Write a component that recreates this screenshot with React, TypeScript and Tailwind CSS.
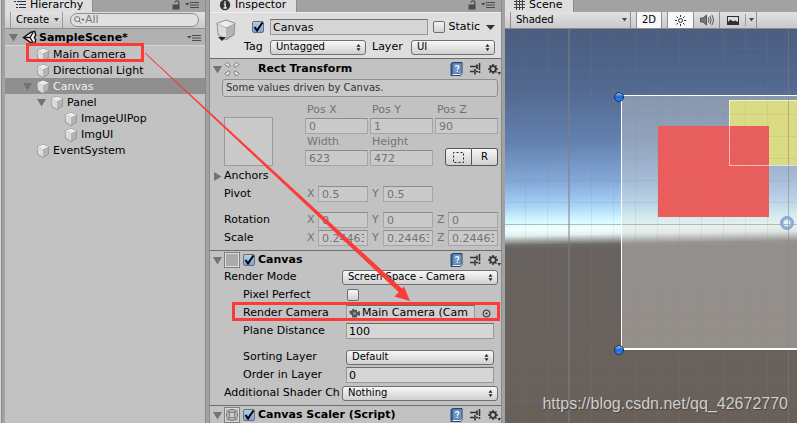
import React from "react";

const font = "font-['DejaVu_Sans',sans-serif]";

function Cube({ className = "h-4 w-4" }: { className?: string }) {
  return (
    <svg className={className} viewBox="0 0 16 16" aria-hidden="true">
      <path d="M8 1 14.3 3.4 13.6 11.4 8 15 2.4 11.4 1.7 3.4Z" fill="#8e8e8e" />
      <path d="M8 1.6 13.8 3.8 8 6.4 2.2 3.8Z" fill="#ececec" />
      <path d="M2.3 4.1 8 6.6V14.2L3.1 11Z" fill="#dcdcdc" />
      <path d="M13.7 4.1 8 6.6V14.2L12.9 11Z" fill="#b4b4b4" />
    </svg>
  );
}

function Fold({ open = true }: { open?: boolean }) {
  return (
    <svg className="h-[9px] w-[9px] shrink-0" viewBox="0 0 9 9" aria-hidden="true">
      <path d={open ? "M0 1H9L4.5 8.5Z" : "M1 0V9L8.5 4.5Z"} fill="#737373" />
    </svg>
  );
}

function PaneMenu() {
  return (
    <svg className="h-2 w-[14px]" viewBox="0 0 14 8" aria-hidden="true">
      <path d="M0 2H4.6L2.3 4.6Z" fill="#4a4a4a" />
      <path d="M5 1.5H14M5 4H14M5 6.5H14" stroke="#4a4a4a" />
    </svg>
  );
}

function Lock() {
  return (
    <svg className="h-[10px] w-[9px]" viewBox="0 0 9 10" aria-hidden="true">
      <rect x="0.5" y="4.5" width="7" height="5" fill="#4a4a4a" />
      <path d="M3 2.5C3.3 .2 6.8 .2 6.8 2.5V5" fill="none" stroke="#4a4a4a" strokeWidth="1.2" />
    </svg>
  );
}

function SmallArrow() {
  return (
    <svg className="h-1 w-[5px]" viewBox="0 0 5 4" aria-hidden="true">
      <path d="M0 0H5L2.5 3.5Z" fill="#4a4a4a" />
    </svg>
  );
}

// Tab strip on top of each pane
function TabBar({
  title,
  icon,
  width,
  tools = false,
}: {
  title: string;
  icon: React.ReactNode;
  width: string;
  tools?: boolean;
}) {
  return (
    <div className="flex h-3 shrink-0 items-start justify-between bg-[#a2a2a2]">
      <div
        className={`flex h-3 items-center gap-1 border-r border-[#8a8a8a] bg-[#dedede] pb-[3px] pl-[9px] ${width}`}
      >
        {icon}
        <h2 className="leading-3">{title}</h2>
      </div>
      {tools && (
        <div className="flex h-[10px] items-center gap-1 pr-[6px]">
          <Lock />
          <PaneMenu />
        </div>
      )}
    </div>
  );
}

const tree = [
  { name: "Main Camera", pad: "pl-[18px]", fold: false },
  { name: "Directional Light", pad: "pl-[18px]", fold: false },
  { name: "Canvas", pad: "pl-[18px]", fold: true, active: true },
  { name: "Panel", pad: "pl-8", fold: true },
  { name: "ImageUIPop", pad: "pl-[46px]", fold: false },
  { name: "ImgUI", pad: "pl-[46px]", fold: false },
  { name: "EventSystem", pad: "pl-[18px]", fold: false },
];

function Hierarchy() {
  return (
    <section className="flex w-[200px] shrink-0 flex-col bg-[#c2c2c2]">
      <TabBar
        title="Hierarchy"
        width="w-[88px]"
        tools
        icon={
          <svg className="h-3 w-3" viewBox="0 0 12 12" aria-hidden="true">
            <path d="M3 2.5H12M5 5.5H12M5 8.5H12" stroke="#333" />
            <path d="M0 2.5H2M2 5.5H4M2 8.5H4" stroke="#333" />
          </svg>
        }
      />
      <div className="flex h-[17px] items-center border-b border-[#8f8f8f] bg-linear-to-b from-[#e2e2e2] to-[#c9c9c9] pl-[5px] pr-[6px]">
        <button className="flex h-4 w-[53px] items-center justify-between border-x border-[#9a9a9a] pl-[5px] pr-[3px] text-[10px]">
          Create
          <SmallArrow />
        </button>
        <label className="ml-[7px] flex h-[14px] flex-1 items-center rounded-full border border-[#8c8c8c] bg-[#e0e0e0] pl-[3px]">
          <svg className="h-[10px] w-[12px]" viewBox="0 0 12 10" aria-hidden="true">
            <circle cx="3.5" cy="4" r="2.8" fill="none" stroke="#6b6b6b" />
            <path d="M5.5 6 8 9" stroke="#6b6b6b" />
            <path d="M7.5 3.5H12L9.7 6Z" fill="#6b6b6b" />
          </svg>
          <input
            aria-label="Search"
            placeholder="All"
            className="w-full min-w-0 bg-transparent text-[11px] leading-3 outline-none placeholder:text-[#7b7b7b]"
          />
        </label>
      </div>
      <div className="flex h-[17px] items-center border-b border-[#d4d4d4] bg-[#b1b1b1] pl-1 pr-1 pt-px font-bold">
        <Fold />
        <svg className="ml-1 h-[15px] w-[15px]" viewBox="0 0 16 16" aria-hidden="true">
          <path d="M9.6 2.4 13.6 1.4 14.6 5.5 13.2 8 14.6 10.5 13.6 14.6 9.6 13.6 1.6 8Z" fill="#f4f4f4" stroke="#111" strokeWidth="1.5" />
          <path d="M8.5 8H3M8.5 8 11.8 2.6M8.5 8 11.8 13.4" stroke="#111" strokeWidth="1.4" />
        </svg>
        <span className="ml-0.5 flex-1">SampleScene*</span>
        <PaneMenu />
      </div>
      <ul>
        {tree.map((item) => (
          <li
            key={item.name}
            className={`flex h-4 items-center pt-px ${item.pad} ${
              item.active ? "bg-[#8f8f8f] text-[#f0f0f0]" : ""
            }`}
          >
            <span className="w-3">{item.fold && <Fold />}</span>
            <Cube />
            <span className="ml-0.5">{item.name}</span>
          </li>
        ))}
      </ul>
    </section>
  );
}

function Check({ label, checked = false }: { label: string; checked?: boolean }) {
  return (
    <span className="relative block h-3 w-3 shrink-0">
      <input
        id={label}
        type="checkbox"
        aria-label={label}
        defaultChecked={checked}
        className="peer block h-3 w-3 appearance-none rounded-[2px] border border-[#6f6f6f] bg-linear-to-b from-[#f4f4f4] to-[#d2d2d2] checked:from-[#b5cdef] checked:to-[#7ba3dc]"
      />
      <svg
        className="pointer-events-none absolute left-0 top-0 hidden h-3 w-3 overflow-visible peer-checked:block"
        viewBox="0 0 12 12"
        aria-hidden="true"
      >
        <path d="M2.5 6 5 9.5 10.5 1.5" fill="none" stroke="#000" strokeWidth="2" />
      </svg>
    </span>
  );
}

function Picker({ id, value, className = "" }: { id: string; value: string; className?: string }) {
  return (
    <span className={`relative h-[15px] ${className}`}>
      <select
        id={id}
        className="block h-[15px] w-full appearance-none rounded-[3px] border border-[#707070] bg-linear-to-b from-[#f8f8f8] to-[#d0d0d0] pl-[5px] text-[10px] leading-3 text-black"
      >
        <option>{value}</option>
      </select>
      <svg
        className="pointer-events-none absolute right-[5px] top-1 h-[7px] w-[5px]"
        viewBox="0 0 5 7"
        aria-hidden="true"
      >
        <path d="M2.5 0 4.5 2.8H.5ZM2.5 7 4.5 4.2H.5Z" fill="#222" />
      </svg>
    </span>
  );
}

function HeadIcons() {
  return (
    <div className="flex items-center gap-[7px]">
      <svg className="h-[14px] w-[13px]" viewBox="0 0 13 14" aria-hidden="true">
        <path d="M1 1.5 3 .5H12V12L10.5 13.5H1Z" fill="#3f6496" stroke="#27456f" />
        <path d="M3.2 1.5H11.5V11.5H3.2Z" fill="#6f94c4" />
        <path d="M2.5 12.5H10.5L11.8 11.5" stroke="#f2f2f2" fill="none" />
        <path d="M5.5 4.8C5.8 3 9 3.2 8.8 5.1 8.6 6.3 7.3 6.2 7.3 7.8M7.3 8.7V10" fill="none" stroke="#fff" strokeWidth="1.2" />
      </svg>
      <svg className="h-3 w-[11px]" viewBox="0 0 11 12" aria-hidden="true">
        <path d="M0 3.5H7M0 8.5H4M6 8.5H8" stroke="#333" strokeWidth="1.5" />
        <path d="M5 6V11.5M7 1.5V6M9.5 0V7M9.5 8V10" stroke="#333" strokeWidth="1.6" />
      </svg>
      <svg className="h-[13px] w-[13px]" viewBox="0 0 13 13" aria-hidden="true">
        <circle cx="5" cy="6" r="2.8" fill="none" stroke="#333" strokeWidth="1.7" />
        <path d="M5 1V3M5 9V11M0 6H2M8 6H10M1.5 2.5 3 4M7 8 8.5 9.5M8.5 2.5 7 4M3 8 1.5 9.5" stroke="#333" strokeWidth="1.5" />
        <path d="M9.5 9H13L11.2 12Z" fill="#333" />
      </svg>
    </div>
  );
}

function SectionHead({
  title,
  icon,
  check = true,
  className = "h-[18px]",
}: {
  title: string;
  icon: React.ReactNode;
  check?: boolean;
  className?: string;
}) {
  return (
    <div className={`flex items-center pl-[3px] ${className}`}>
      <Fold />
      <span className="ml-0.5 h-4 w-4">{icon}</span>
      <span className="ml-[3px] w-[15px]">{check && <Check label={`${title} enabled`} checked />}</span>
      <h3 className="flex-1 font-bold">{title}</h3>
      <HeadIcons />
    </div>
  );
}

const greyField =
  "block h-4 w-full min-w-0 border border-[#a5a5a5] border-t-[#8c8c8c] bg-[#cacaca] px-[3px] text-[11px] leading-3 text-[#737373]";

function Vector({ name, values, className }: { name: string; values: string[]; className: string }) {
  return (
    <div className={`flex h-4 items-center ${className}`}>
      <span className="w-[83px] shrink-0 pl-0.5">{name}</span>
      <div className="grid flex-1 grid-cols-3 gap-x-0.5">
        {values.map((value, i) => (
          <label key={i} className="flex items-center text-[#737373]">
            <span className="w-[13px] shrink-0 pl-0.5">{"XYZ"[i]}</span>
            <input disabled defaultValue={value} className={greyField} />
          </label>
        ))}
      </div>
    </div>
  );
}

function RectTransform() {
  return (
    <div className="border-t border-[#6d6d6d] pb-1">
      <SectionHead
        title="Rect Transform"
        check={false}
        className="h-5"
        icon={
          <svg className="h-4 w-4" viewBox="0 0 16 16" aria-hidden="true">
            <g fill="#efefef" stroke="#777">
              <path d="M1 3.5 3.5 1 6.3 5 5 6.3Z" />
              <path d="M15 3.5 12.5 1 9.7 5 11 6.3Z" />
              <path d="M1 12.5 3.5 15 6.3 11 5 9.7Z" />
              <path d="M15 12.5 12.5 15 9.7 11 11 9.7Z" />
            </g>
          </svg>
        }
      />
      <div className="pl-3 pr-[3px]">
        <p className="h-[18px] rounded-[3px] border border-[#8f8f8f] bg-[#c9c9c9] pl-[3px] text-[10px] leading-4 text-[#333]">
          Some values driven by Canvas.
        </p>
        <div className="mt-[5px] flex text-[#737373]">
          <div className="flex w-[83px] shrink-0 items-end pl-0.5">
            <div className="h-[49px] w-[49px] border border-[#9a9a9a] bg-[#cacaca]" />
          </div>
          <div className="grid flex-1 grid-cols-3 gap-x-0.5">
            {[
              ["Pos X", "0"],
              ["Pos Y", "1"],
              ["Pos Z", "90"],
              ["Width", "623"],
              ["Height", "472"],
            ].map(([name, value]) => (
              <label key={name} className="block">
                <span className="block h-4 pl-0.5 leading-4">{name}</span>
                <input disabled defaultValue={value} className={greyField} />
              </label>
            ))}
            <div className="flex items-end justify-end text-black">
              <button
                aria-label="Blueprint mode"
                className="flex h-[18px] w-[27px] items-center justify-center rounded-l-[3px] border border-[#555] bg-linear-to-b from-[#f6f6f6] to-[#d0d0d0]"
              >
                <svg className="h-[11px] w-[11px]" viewBox="0 0 11 11" aria-hidden="true">
                  <rect x="0.5" y="0.5" width="10" height="10" fill="none" stroke="#222" strokeDasharray="2 2" strokeDashoffset="1" />
                </svg>
              </button>
              <button className="h-[18px] w-[26px] rounded-r-[3px] border border-l-0 border-[#555] bg-linear-to-b from-[#f6f6f6] to-[#d0d0d0] text-[10px]">
                R
              </button>
            </div>
          </div>
        </div>
      </div>
      <div className="mt-0.5 flex h-4 items-center pl-[3px]">
        <Fold open={false} />
        <span className="ml-0.5">Anchors</span>
      </div>
      <div className="pl-3 pr-[3px]">
        <Vector name="Pivot" values={["0.5", "0.5"]} className="mt-0.5" />
        <Vector name="Rotation" values={["0", "0", "0"]} className="mt-[10px]" />
        <Vector name="Scale" values={["0.24463", "0.24463", "0.24463"]} className="mt-0.5" />
      </div>
    </div>
  );
}

function Row({
  id,
  name,
  indent = false,
  children,
}: {
  id: string;
  name: string;
  indent?: boolean;
  children: React.ReactNode;
}) {
  return (
    <div className={`flex h-4 items-center ${indent ? "pl-[33px] pr-[7px]" : "pl-[14px] pr-[3px]"}`}>
      <label
        htmlFor={id}
        className={`shrink-0 overflow-hidden whitespace-nowrap ${indent ? "w-[103px]" : "w-[118px]"}`}
      >
        {name}
      </label>
      {children}
    </div>
  );
}

const field =
  "h-4 min-w-0 flex-1 border border-[#999] border-t-[#6d6d6d] bg-[#d6d6d6] px-0.5 text-[11px] leading-3 text-black";

function CanvasSection() {
  return (
    <div className="border-t border-[#6d6d6d] pb-1">
      <SectionHead
        title="Canvas"
        icon={<span className="block h-4 w-4 border border-[#808080] bg-[#a9a9a9] outline-1 -outline-offset-2 outline-[#ddd]" />}
      />
      <div className="flex flex-col gap-0.5">
        <Row id="mode" name="Render Mode">
          <Picker id="mode" value="Screen Space - Camera" className="flex-1" />
        </Row>
        <Row id="Pixel Perfect" name="Pixel Perfect" indent>
          <span className="pl-px">
            <Check label="Pixel Perfect" />
          </span>
        </Row>
        <Row id="camera" name="Render Camera" indent>
          <div className="flex h-4 min-w-0 flex-1 items-center border border-[#999] border-t-[#6d6d6d] bg-[#cfcfcf] pl-0.5">
            <svg className="h-3 w-3 shrink-0" viewBox="0 0 12 12" aria-hidden="true">
              <path d="M0 4H2L4 1.5 6 3 8 2.5V5L11 4V9L8 8V10.5H3V8L1 7Z" fill="#4d5a5a" />
              <path d="M4 5H7V8H4Z" fill="#78888a" />
            </svg>
            <input
              id="camera"
              defaultValue="Main Camera (Cam"
              className="ml-px min-w-0 flex-1 bg-transparent text-[11px] leading-3"
            />
          </div>
          <button aria-label="Select camera" className="ml-[7px] mr-[3px] h-[9px] w-[9px]">
            <svg className="h-[9px] w-[9px]" viewBox="0 0 9 9" aria-hidden="true">
              <circle cx="4.5" cy="4.5" r="3.5" fill="none" stroke="#222" />
              <circle cx="4.5" cy="4.5" r="1" fill="#222" />
            </svg>
          </button>
        </Row>
        <Row id="distance" name="Plane Distance" indent>
          <input id="distance" defaultValue="100" className={field} />
        </Row>
      </div>
      <div className="mt-[10px] flex flex-col gap-0.5">
        <Row id="sorting" name="Sorting Layer" indent>
          <Picker id="sorting" value="Default" className="flex-1" />
        </Row>
        <Row id="order" name="Order in Layer" indent>
          <input id="order" defaultValue="0" className={field} />
        </Row>
        <Row id="shader" name="Additional Shader Ch">
          <Picker id="shader" value="Nothing" className="flex-1" />
        </Row>
      </div>
    </div>
  );
}

function Inspector() {
  return (
    <section className="flex w-[292px] shrink-0 flex-col border-l border-[#8a8a8a] bg-[#c2c2c2]">
      <TabBar
        title="Inspector"
        width="w-[87px]"
        tools
        icon={
          <svg className="h-3 w-3" viewBox="0 0 12 12" aria-hidden="true">
            <circle cx="6" cy="6" r="5.2" fill="#333" />
            <path d="M6 2.2V4M4.8 5.3H6.2V8.6M4.5 9H7.8" stroke="#eee" strokeWidth="1.4" fill="none" />
          </svg>
        }
      />
      <div className="flex h-[46px] shrink-0 border-t border-[#eee] bg-[#dedede]">
        <div className="relative w-[34px] shrink-0 pl-1 pt-[5px]">
          <Cube className="h-6 w-6" />
          <svg className="absolute left-2 top-6 h-1 w-2" viewBox="0 0 8 4" aria-hidden="true">
            <path d="M0 0H8L4 4Z" fill="#222" />
          </svg>
        </div>
        <div className="flex flex-1 flex-col pt-[6px]">
          <div className="flex h-4 items-center pl-2">
            <Check label="Active" checked />
            <input
              aria-label="Name"
              defaultValue="Canvas"
              className="ml-[6px] h-4 min-w-0 flex-1 border border-[#999] border-t-[#6d6d6d] bg-[#d6d6d6] px-0.5 text-[11px] leading-3"
            />
            <span className="ml-[5px] flex">
              <Check label="Static" />
            </span>
            <label htmlFor="Static" className="ml-1">
              Static
            </label>
            <svg className="ml-[6px] mr-[6px] h-[5px] w-[9px]" viewBox="0 0 9 5" aria-hidden="true">
              <path d="M0 0H9L4.5 5Z" fill="#333" />
            </svg>
          </div>
          <div className="mt-1 flex h-4 items-center pr-[6px]">
            <label htmlFor="tag" className="w-[26px]">
              Tag
            </label>
            <Picker id="tag" value="Untagged" className="w-24" />
            <label htmlFor="layer" className="ml-[6px] w-[39px]">
              Layer
            </label>
            <Picker id="layer" value="UI" className="flex-1" />
          </div>
        </div>
      </div>
      <RectTransform />
      <CanvasSection />
      <div className="border-t border-[#6d6d6d]">
        <SectionHead
          title="Canvas Scaler (Script)"
          icon={
            <svg className="h-4 w-4" viewBox="0 0 16 16" aria-hidden="true">
              <rect x="0.5" y="0.5" width="15" height="15" fill="#d9d9d9" stroke="#808080" />
              <rect x="2" y="2" width="12" height="12" fill="#b5b5b5" />
              <path d="M6 2.5H10M6 13.5H10M2.5 6V10M13.5 6V10M4 4H6M4 4V6M12 4H10M12 4V6M4 12H6M4 12V10M12 12H10M12 12V10" stroke="#777" />
              <rect x="5.5" y="5.5" width="5" height="5" fill="#ccc" stroke="#888" />
            </svg>
          }
        />
      </div>
    </section>
  );
}

const columns = [20, 42, 86, 108, 130, 152, 174, 196, 218, 240, 262];
const lines = [19, 41, 63, 85, 107, 129, 151, 173, 217, 239, 261, 283, 305, 327, 349, 371];

function SceneView() {
  return (
    <svg className="absolute inset-0 h-full w-full" aria-label="Scene view">
      <defs>
        <linearGradient id="sky" gradientUnits="userSpaceOnUse" x1="0" y1="0" x2="7" y2="394">
          <stop offset="0" stopColor="#4b5d80" />
          <stop offset="0.15" stopColor="#51688f" />
          <stop offset="0.29" stopColor="#6381b0" />
          <stop offset="0.39" stopColor="#84a9d8" />
          <stop offset="0.45" stopColor="#a8d2f6" />
          <stop offset="0.485" stopColor="#cff6ff" />
          <stop offset="0.51" stopColor="#f1ffff" />
          <stop offset="0.525" stopColor="#e2f0f0" />
          <stop offset="0.55" stopColor="#6c6967" />
          <stop offset="0.56" stopColor="#686360" />
          <stop offset="1" stopColor="#69605a" />
        </linearGradient>
        <linearGradient id="knob" x1="0" y1="0" x2="0" y2="1">
          <stop offset="0" stopColor="#9cc4f5" />
          <stop offset="0.5" stopColor="#1668e0" />
          <stop offset="1" stopColor="#3b8dfa" />
        </linearGradient>
      </defs>
      <rect width="100%" height="100%" fill="url(#sky)" />
      <rect x="117" y="67" width="100%" height="253" fill="#dedad6" fillOpacity="0.38" />
      <rect x="224" y="71" width="100%" height="65" fill="#dbdb84" />
      <rect x="153" y="97" width="111" height="91" fill="#ea5d5d" />
      <g stroke="#808080" strokeOpacity="0.13">
        {columns.map((x) => (
          <line key={x} x1={x + 0.5} x2={x + 0.5} y1="0" y2="100%" />
        ))}
        {lines.map((y) => (
          <line key={y} x1="0" x2="100%" y1={y + 0.5} y2={y + 0.5} />
        ))}
      </g>
      <g stroke="#808080" strokeOpacity="0.5">
        <line x1="64" x2="64" y1="0" y2="100%" strokeWidth="2" />
        <line x1="283.5" x2="283.5" y1="0" y2="100%" />
        <line x1="0" x2="100%" y1="195.5" y2="195.5" />
      </g>
      <rect x="224.5" y="71.5" width="100%" height="65" fill="none" stroke="#fff" strokeOpacity="0.6" />
      <path d="M900 66.5H116.5V320" fill="none" stroke="#fff" />
      <path d="M116 320H900" stroke="#fff" strokeWidth="2" />
      <circle cx="114" cy="68" r="4.5" fill="url(#knob)" stroke="#1d2b45" />
      <circle cx="114" cy="321" r="4.5" fill="url(#knob)" stroke="#1d2b45" />
      <circle cx="282" cy="194" r="5" fill="none" stroke="#8bb0df" strokeWidth="3" />
      <circle cx="282" cy="194" r="6.5" fill="none" stroke="#7393bb" strokeOpacity="0.7" />
    </svg>
  );
}

function Scene() {
  return (
    <section className="flex min-w-0 flex-1 flex-col bg-[#c2c2c2]">
      <TabBar
        title="Scene"
        width="w-[69px]"
        icon={
          <svg className="h-[11px] w-[11px]" viewBox="0 0 11 11" aria-hidden="true">
            <path d="M2.5 0V11M5.5 0V11M8.5 0V11M0 2.5H11M0 5.5H11M0 8.5H11" stroke="#444" />
          </svg>
        }
      />
      <div className="flex h-[17px] shrink-0 border-b border-[#8a8a8a] bg-linear-to-b from-[#e2e2e2] to-[#c9c9c9] pl-[5px] text-[10px]">
        <button className="flex w-[121px] items-center justify-between border-x border-[#8f8f8f] pl-[5px] pr-[3px]">
          Shaded
          <SmallArrow />
        </button>
        <button className="ml-[5px] w-[26px] border-x border-[#8f8f8f] bg-[#f8f8f8]">2D</button>
        <button
          aria-label="Lighting"
          className="ml-[5px] flex w-[27px] items-center justify-center border-x border-[#8f8f8f] bg-[#f8f8f8]"
        >
          <svg className="h-[11px] w-[11px]" viewBox="0 0 11 11" aria-hidden="true">
            <circle cx="5.5" cy="5.5" r="2" fill="none" stroke="#333" />
            <path d="M5.5 0V2M5.5 9V11M0 5.5H2M9 5.5H11M1.5 1.5 3 3M8 8 9.5 9.5M9.5 1.5 8 3M3 8 1.5 9.5" stroke="#333" />
          </svg>
        </button>
        <button aria-label="Audio" className="flex w-[26px] items-center justify-center border-r border-[#8f8f8f]">
          <svg className="h-3 w-[14px]" viewBox="0 0 14 12" aria-hidden="true">
            <path d="M0.5 4H3L6.5 1V11L3 8H.5Z" fill="#777" stroke="#555" />
            <path d="M8.3 3.5Q9.8 6 8.3 8.5M10 2Q12.3 6 10 10M11.8.8Q15 6 11.8 11.2" fill="none" stroke="#555" />
          </svg>
        </button>
        <button aria-label="Effects" className="flex w-[37px] items-center border-r border-[#8f8f8f] pl-[7px]">
          <svg className="h-[9px] w-3" viewBox="0 0 12 9" aria-hidden="true">
            <rect width="12" height="9" fill="#2e2e2e" />
            <path d="M1 6 3.5 3.5 6 5.5 8 4.5 11 6V1H1Z" fill="#ddd" />
          </svg>
          <span className="ml-[6px] flex h-3 items-center border-l border-[#9a9a9a] pl-[3px]">
            <SmallArrow />
          </span>
        </button>
      </div>
      <div className="relative flex flex-1 items-end justify-end overflow-hidden">
        <SceneView />
        <p className="relative pb-[7px] pr-[9px] font-['Liberation_Sans',sans-serif] text-[16px] leading-6 text-[#d0cdca] [text-shadow:1px_1px_1px_#444]">
          https://blog.csdn.net/qq_42672770
        </p>
      </div>
    </section>
  );
}

export default function App() {
  return (
    <main className={`relative flex h-screen overflow-hidden bg-[#a2a2a2] text-[11px] leading-4 text-black ${font}`}>
      <div className="mr-[3px] w-0.5 shrink-0 border-r border-[#8a8a8a] bg-[#d6d6d6]" />
      <Hierarchy />
      <div className="w-1 shrink-0 border-l border-[#8a8a8a]" />
      <Inspector />
      <div className="w-1 shrink-0 border-l border-[#8a8a8a]" />
      <Scene />

      {/* Red marks and the arrow over the panes */}
      <div className="pointer-events-none absolute left-[26px] top-[43px] h-[19px] w-[118px] border-3 border-[#fb3b38]" />
      <div className="pointer-events-none absolute left-[232px] top-[302px] h-[19px] w-[268px] border-3 border-[#fb3b38]" />
      <svg className="pointer-events-none absolute left-[144px] top-[52px] h-[250px] w-[270px]" aria-hidden="true">
        <path d="M1 1 256 241 259 238Z" fill="#fb3b38" stroke="#fb3b38" strokeWidth="0.8" />
        <path d="M266 249 250.5 244.5 260 234.5Z" fill="#fb3b38" />
      </svg>
    </main>
  );
}
